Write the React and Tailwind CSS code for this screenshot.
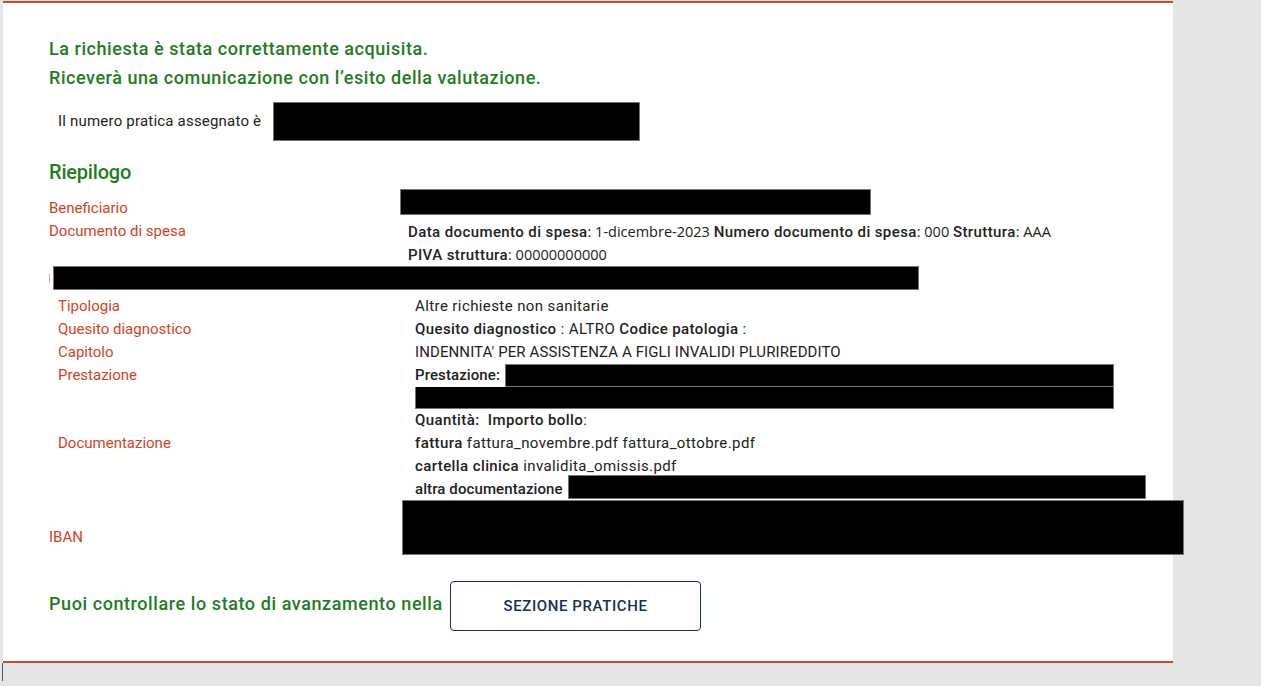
import React from 'react';

const labelCls = "text-[15px] leading-[23px] text-[#d4431f]";
const valueCls = "text-[15px] leading-[23px] text-[#222] tracking-[0.4px]";
const openSans = { fontFamily: '"Open Sans", sans-serif' };

function Row({ label, children, indent }) {
    return (
        <div className={`flex ${indent ? 'pl-[9px]' : ''}`}>
            <div className={`${labelCls} ${indent ? 'w-[357px]' : 'w-[359px]'} shrink-0`}>{label}</div>
            <div className={valueCls}>{children}</div>
        </div>
    );
}

function Redacted({ className }) {
    return <div className={`bg-black border border-[#777] shrink-0 ${className}`} />;
}

export default function App() {
    return (
        <div className="w-full h-[686px] bg-[#e5e5e5] overflow-hidden" style={{ fontFamily: 'Roboto, "Open Sans", sans-serif' }}>
            <div className="ml-[3px] mt-px w-[1170px] bg-white border-t-2 border-b-2 border-[#d2472a] pt-[31px] pb-[30px] pl-[46px]">
                {/* Esito */}
                <div className="text-[18px] leading-[29px] font-medium text-[#1e7d1e] tracking-[0.55px]">
                    <p>La richiesta è stata correttamente acquisita.</p>
                    <p>Riceverà una comunicazione con l’esito della valutazione.</p>
                </div>

                <div className="mt-[10px] flex items-center h-[39px] pl-[9px]">
                    <span className="text-[15px] tracking-[0.2px] text-[#222] w-[215px]">Il numero pratica assegnato è</span>
                    <Redacted className="w-[367px] h-[39px]" />
                </div>

                {/* Riepilogo */}
                <h2 className="mt-[17px] text-[20px] leading-[28px] font-medium text-[#1e7d1e] tracking-[-0.2px]">Riepilogo</h2>

                <div className="mt-[3px] flex">
                    <div className={`${labelCls} w-[351px] shrink-0 mt-[8px]`}>Beneficiario</div>
                    <Redacted className="w-[471px] h-[26px]" />
                </div>

                <div className="flex">
                    <div className={`${labelCls} w-[359px] shrink-0`}>Documento di spesa</div>
                    <div className="text-[15px] leading-[23px] text-[#222] whitespace-nowrap">
                        <div className="h-[23px]">
                            <span className="font-medium tracking-[0.4px]">Data documento di spesa</span>
                            <span style={openSans} className="text-[14.5px] leading-[23px]">: 1-dicembre-2023 </span>
                            <span className="font-medium tracking-[0.4px]">Numero documento di spesa</span>
                            <span style={openSans} className="text-[14.5px] leading-[23px]">: 000 </span>
                            <span className="font-medium tracking-[0.4px]">Struttura</span>
                            <span style={openSans} className="text-[14.5px] leading-[23px]">: AAA</span>
                        </div>
                        <div className="h-[23px]">
                            <span className="font-medium tracking-[0.4px]">PIVA struttura</span>
                            <span style={openSans} className="text-[14.5px] leading-[23px]">: 00000000000</span>
                        </div>
                    </div>
                </div>

                <div className="flex items-center">
                    <div className="w-px h-[9px] bg-[#e8a090] mr-[3px]" />
                    <Redacted className="w-[866px] h-[24px]" />
                </div>

                <div className="mt-[5px]">
                    <Row indent label="Tipologia">Altre richieste non sanitarie</Row>
                    <Row indent label="Quesito diagnostico">
                        <span className="font-medium">Quesito diagnostico</span> : ALTRO <span className="font-medium">Codice patologia</span> :
                    </Row>
                    <Row indent label="Capitolo">
                        <span className="tracking-[0.1px]">INDENNITA' PER ASSISTENZA A FIGLI INVALIDI PLURIREDDITO</span>
                    </Row>
                    <Row indent label="Prestazione">
                        <div className="flex">
                            <span className="font-medium w-[90px] whitespace-nowrap tracking-[0.1px]">Prestazione:</span>
                            <Redacted className="w-[609px] h-[23px]" />
                        </div>
                        <Redacted className="w-[699px] h-[22px] border-t-0" />
                        <div><span className="font-medium">Quantità:</span>&nbsp; <span className="font-medium">Importo bollo</span>:</div>
                    </Row>
                    <Row indent label="Documentazione">
                        <div><span className="font-medium">fattura</span> fattura_novembre.pdf fattura_ottobre.pdf</div>
                        <div><span className="font-medium">cartella clinica</span> invalidita_omissis.pdf</div>
                        <div className="flex">
                            <span className="font-medium w-[153px] whitespace-nowrap tracking-[0.1px]">altra documentazione</span>
                            <Redacted className="w-[578px] h-[24px] -mt-[3px]" />
                        </div>
                    </Row>
                </div>

                <div className="-mt-[1px] flex">
                    <div className={`${labelCls} w-[353px] shrink-0 mt-[26px]`}>IBAN</div>
                    <Redacted className="w-[782px] h-[55px]" />
                </div>

                {/* Azioni */}
                <div className="mt-[26px] flex items-center">
                    <span className="text-[18px] font-medium text-[#1e7d1e] tracking-[0.58px] -mt-[5px] w-[401px] whitespace-nowrap">Puoi controllare lo stato di avanzamento nella</span>
                    <button className="w-[251px] h-[50px] border border-[#17324d] rounded-[4px] bg-white text-[15px] font-medium text-[#17324d] tracking-[0.6px]">
                        SEZIONE PRATICHE
                    </button>
                </div>
            </div>
            <div className="ml-[2px] w-px h-[18px] bg-[#555]" />
        </div>
    );
}
